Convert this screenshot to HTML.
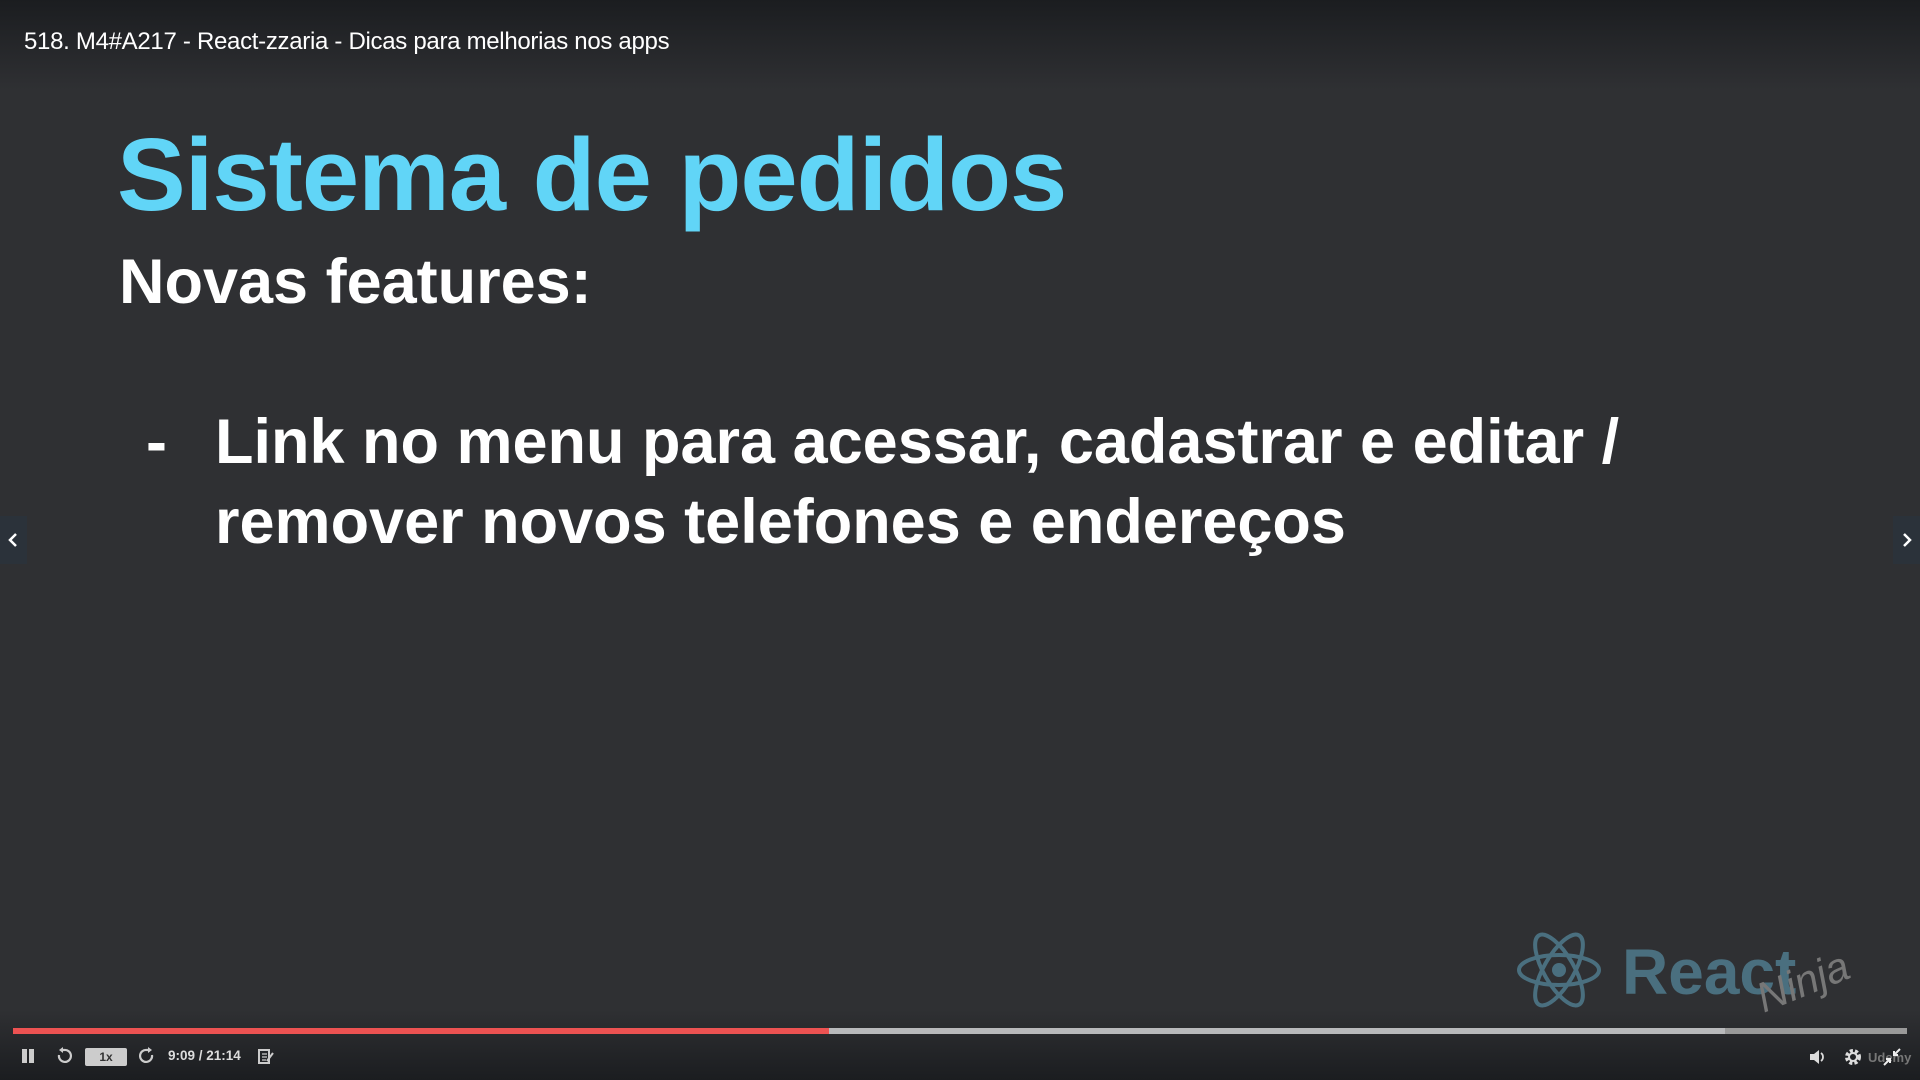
<!DOCTYPE html>
<html><head><meta charset="utf-8"><style>
*{margin:0;padding:0;box-sizing:border-box}
body{width:1920px;height:1080px;background:#2f3033;position:relative;overflow:hidden;font-family:"Liberation Sans",sans-serif}
.top{position:absolute;left:0;top:0;width:1920px;height:90px;background:linear-gradient(#1b1d20,#2f3033)}
.title{position:absolute;left:24px;top:28px;color:#fff;font-size:24px;letter-spacing:-0.3px}
.h1{position:absolute;left:117px;top:116px;color:#61d5f7;font-weight:bold;font-size:103px;letter-spacing:-1px;white-space:nowrap}
.h2{position:absolute;left:119px;top:246px;color:#fff;font-weight:bold;font-size:63px;white-space:nowrap}
.b{position:absolute;color:#fff;font-weight:bold;font-size:63px;white-space:nowrap}
.bottom{position:absolute;left:0;top:1010px;width:1920px;height:70px;background:linear-gradient(#2f3033,#1b1d20)}
.nav{position:absolute;top:516px;width:27px;height:48px;background:#2b323a}
</style></head><body>
<div class="top"></div>
<div class="title">518. M4#A217 - React-zzaria - Dicas para melhorias nos apps</div>
<div class="h1">Sistema de pedidos</div>
<div class="h2">Novas features:</div>
<div class="b" style="left:146px;top:406px">-</div>
<div class="b" style="left:215px;top:406px">Link no menu para acessar, cadastrar e editar /</div>
<div class="b" style="left:215px;top:486px">remover novos telefones e endereços</div>
<div class="nav" style="left:0"><svg width="27" height="48"><path d="M16 18 L10 24 L16 30" stroke="#fff" stroke-width="2.5" fill="none"/></svg></div>
<div class="nav" style="right:0"><svg width="27" height="48"><path d="M11 18 L17 24 L11 30" stroke="#fff" stroke-width="2.5" fill="none"/></svg></div>
<svg style="position:absolute;left:1515px;top:930px" width="90" height="80" viewBox="0 0 90 80">
<g fill="none" stroke="#4a6f7f" stroke-width="4"><ellipse cx="44" cy="40" rx="40" ry="15"/><ellipse cx="44" cy="40" rx="40" ry="15" transform="rotate(60 44 40)"/><ellipse cx="44" cy="40" rx="40" ry="15" transform="rotate(-60 44 40)"/></g><circle cx="44" cy="40" r="7" fill="#4a6f7f"/></svg>
<div style="position:absolute;left:1622px;top:935px;color:#4a6f7f;font-weight:bold;font-size:64px">React</div>
<div class="bottom"></div>
<div style="position:absolute;left:1755px;top:958px;color:#777;font-size:42px;transform:rotate(-22deg);font-style:italic">Ninja</div>
<div style="position:absolute;left:13px;top:1028px;width:816px;height:6px;background:#ec5252"></div>
<div style="position:absolute;left:829px;top:1028px;width:896px;height:6px;background:#b8b9bb"></div>
<div style="position:absolute;left:1725px;top:1028px;width:182px;height:6px;background:#999"></div>
<div style="position:absolute;left:22px;top:1049px;width:5px;height:14px;background:#ccc"></div>
<div style="position:absolute;left:29px;top:1049px;width:5px;height:14px;background:#ccc"></div>
<svg style="position:absolute;left:55px;top:1047px" width="18" height="18"><path d="M4 8 A6 6 0 1 0 9 3 L6 3" stroke="#ccc" stroke-width="2.2" fill="none"/><path d="M8 0 L4 3 L8 6z" fill="#ccc"/></svg>
<div style="position:absolute;left:85px;top:1048px;width:42px;height:18px;background:#ccc;border-radius:2px;color:#333;font-size:12px;font-weight:bold;text-align:center;line-height:18px">1x</div>
<svg style="position:absolute;left:138px;top:1047px" width="18" height="18"><path d="M14 8 A6 6 0 1 1 9 3 L12 3" stroke="#ccc" stroke-width="2.2" fill="none"/><path d="M10 0 L14 3 L10 6z" fill="#ccc"/></svg>
<div style="position:absolute;left:168px;top:1048px;color:#ddd;font-size:13.5px;font-weight:bold">9:09 / 21:14</div>
<svg style="position:absolute;left:258px;top:1049px" width="16" height="16"><rect x="1" y="1" width="10" height="13" fill="none" stroke="#ccc" stroke-width="2"/><path d="M4 5h5M4 8h5M4 11h4" stroke="#ccc" stroke-width="1.3"/><path d="M9 12 L15 4" stroke="#ccc" stroke-width="2"/></svg>
<svg style="position:absolute;left:1808px;top:1048px" width="20" height="18"><path d="M2 6h4l5-4v14l-5-4H2z" fill="#ddd"/><path d="M13 5a5 5 0 0 1 0 8" stroke="#ddd" stroke-width="1.8" fill="none"/></svg>
<svg style="position:absolute;left:1843px;top:1047px" width="20" height="20"><circle cx="10" cy="10" r="6" fill="none" stroke="#ddd" stroke-width="4" stroke-dasharray="3 2"/><circle cx="10" cy="10" r="4" fill="none" stroke="#ddd" stroke-width="2"/></svg>
<div style="position:absolute;left:1868px;top:1050px;color:#777;font-size:13px;font-weight:bold">Udemy</div>
<svg style="position:absolute;left:1882px;top:1046px" width="20" height="22"><path d="M2 19 L8 13 M4 13h4v4 M18 3 L12 9 M12 5v4h4" stroke="#eee" stroke-width="2" fill="none"/></svg>
</body></html>
